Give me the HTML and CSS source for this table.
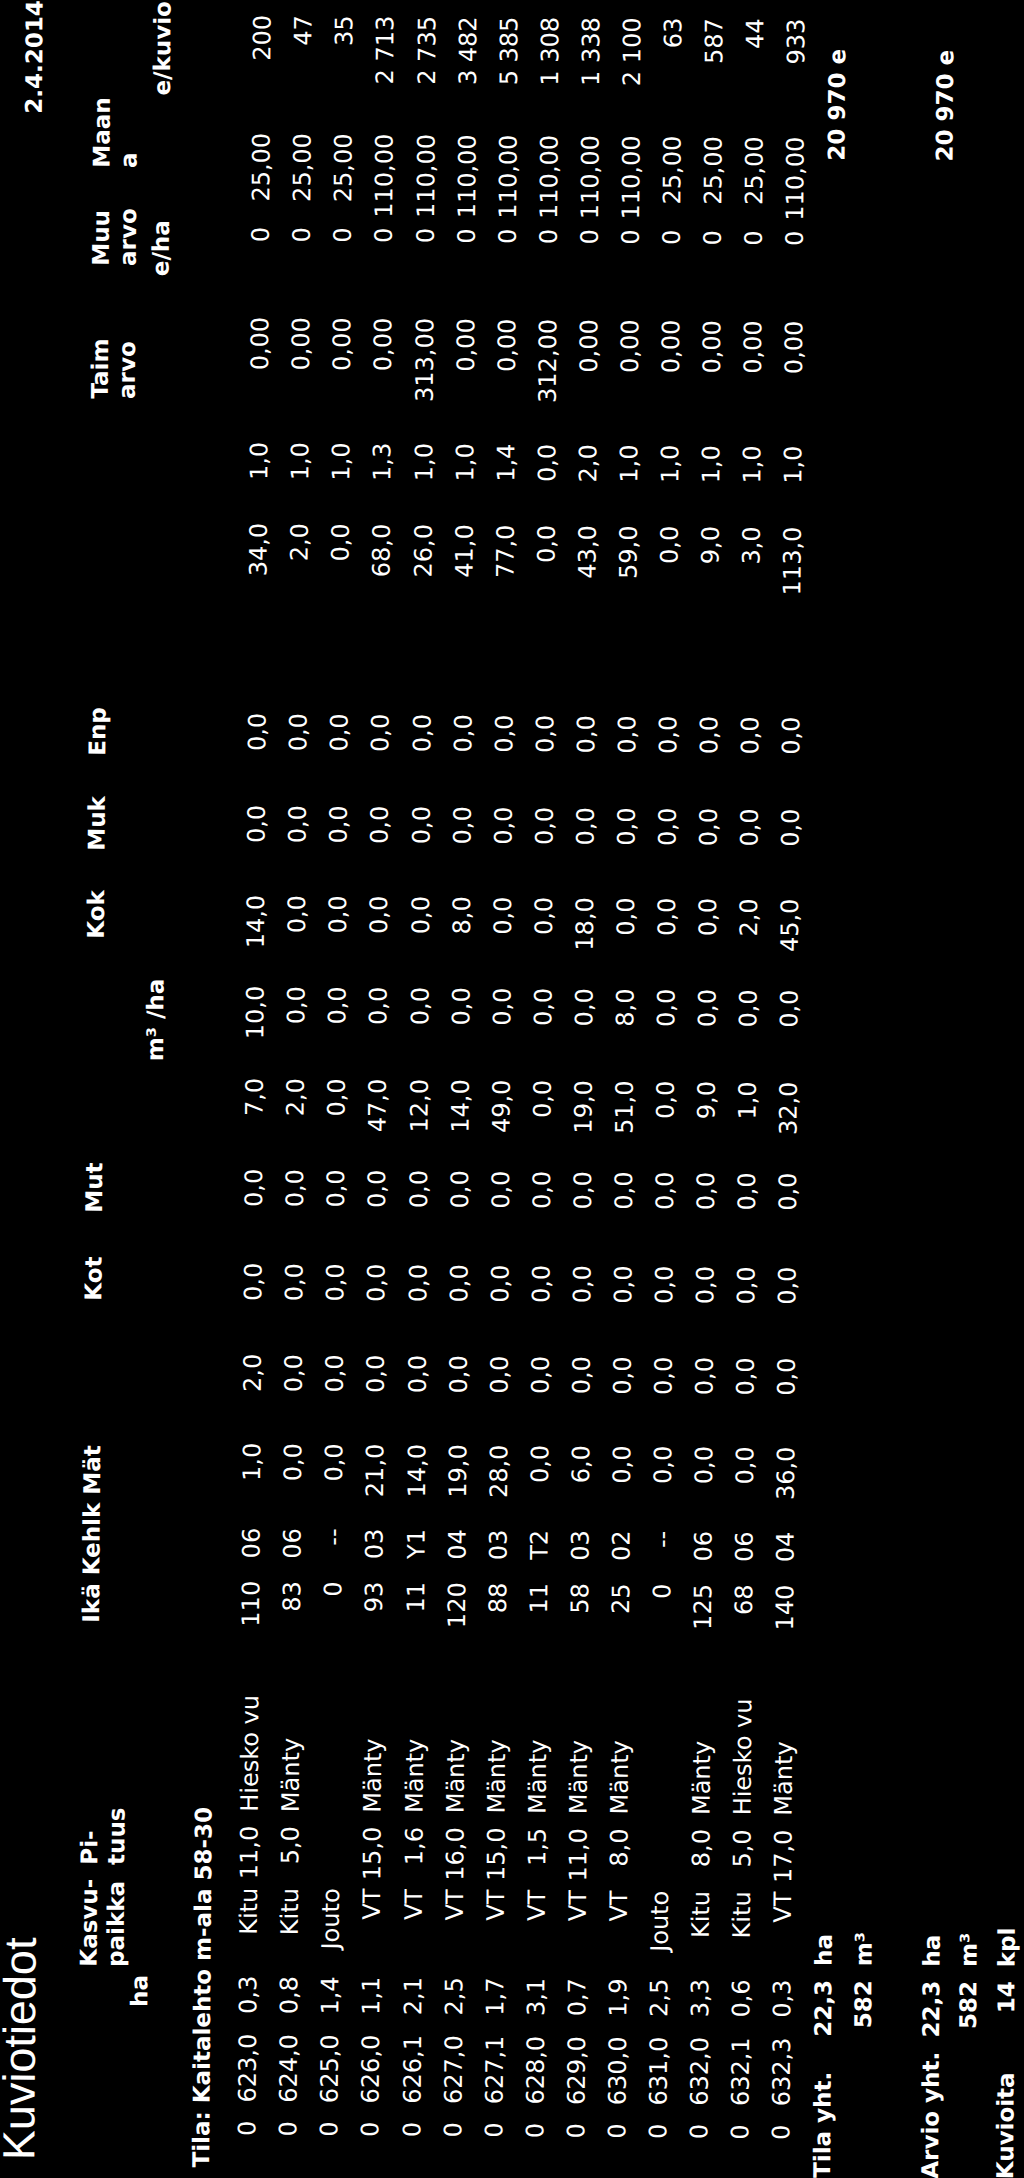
FILE: index.html
```html
<!DOCTYPE html>
<html lang="fi">
<head>
<meta charset="utf-8">
<title>Kuviotiedot</title>
<link rel="stylesheet" href="styles.css">
</head>
<body>
<div class="viewport">
  <div class="page">
    <div class="topbar">
      <h1 class="title">Kuviotiedot</h1>
      <div class="date">2.4.2014</div>
    </div>

    <div class="cols head">
      <div class="h h-ha">ha</div>
      <div class="h h-kasvu"><span>Kasvu-</span><span>paikka</span></div>
      <div class="h h-pi"><span>Pi-</span><span>tuus</span></div>
      <div class="h h-ika">Ikä Kehlk Mät</div>
      <div class="h h-kot">Kot</div>
      <div class="h h-mut">Mut</div>
      <div class="h h-m3">m³ /ha</div>
      <div class="h h-kok">Kok</div>
      <div class="h h-muk">Muk</div>
      <div class="h h-enp">Enp</div>
      <div class="h h-taim"><span>Taim</span><span>arvo</span></div>
      <div class="h h-muu"><span>Muu</span><span>arvo</span><span class="l3">e/ha</span></div>
      <div class="h h-maan"><span>Maan</span><span>a</span></div>
      <div class="h h-kuvio">e/kuvio</div>
    </div>

    <div class="section">Tila: Kaitalehto m-ala 58-30</div>

    <div class="rows">
      <div class="cols row"><span>0</span><span>623,0</span><span>0,3</span><span>Kitu</span><span>11,0</span><span class="sp">Hiesko vu</span><span>110</span><span>06</span><span>1,0</span><span>2,0</span><span>0,0</span><span>0,0</span><span>7,0</span><span>10,0</span><span>14,0</span><span>0,0</span><span>0,0</span><span>34,0</span><span>1,0</span><span>0,00</span><span>0</span><span>25,00</span><span>200</span></div>
      <div class="cols row"><span>0</span><span>624,0</span><span>0,8</span><span>Kitu</span><span>5,0</span><span class="sp">Mänty</span><span>83</span><span>06</span><span>0,0</span><span>0,0</span><span>0,0</span><span>0,0</span><span>2,0</span><span>0,0</span><span>0,0</span><span>0,0</span><span>0,0</span><span>2,0</span><span>1,0</span><span>0,00</span><span>0</span><span>25,00</span><span>47</span></div>
      <div class="cols row"><span>0</span><span>625,0</span><span>1,4</span><span>Jouto</span><span></span><span class="sp"></span><span>0</span><span>--</span><span>0,0</span><span>0,0</span><span>0,0</span><span>0,0</span><span>0,0</span><span>0,0</span><span>0,0</span><span>0,0</span><span>0,0</span><span>0,0</span><span>1,0</span><span>0,00</span><span>0</span><span>25,00</span><span>35</span></div>
      <div class="cols row"><span>0</span><span>626,0</span><span>1,1</span><span>VT</span><span>15,0</span><span class="sp">Mänty</span><span>93</span><span>03</span><span>21,0</span><span>0,0</span><span>0,0</span><span>0,0</span><span>47,0</span><span>0,0</span><span>0,0</span><span>0,0</span><span>0,0</span><span>68,0</span><span>1,3</span><span>0,00</span><span>0</span><span>110,00</span><span>2 713</span></div>
      <div class="cols row"><span>0</span><span>626,1</span><span>2,1</span><span>VT</span><span>1,6</span><span class="sp">Mänty</span><span>11</span><span>Y1</span><span>14,0</span><span>0,0</span><span>0,0</span><span>0,0</span><span>12,0</span><span>0,0</span><span>0,0</span><span>0,0</span><span>0,0</span><span>26,0</span><span>1,0</span><span>313,00</span><span>0</span><span>110,00</span><span>2 735</span></div>
      <div class="cols row"><span>0</span><span>627,0</span><span>2,5</span><span>VT</span><span>16,0</span><span class="sp">Mänty</span><span>120</span><span>04</span><span>19,0</span><span>0,0</span><span>0,0</span><span>0,0</span><span>14,0</span><span>0,0</span><span>8,0</span><span>0,0</span><span>0,0</span><span>41,0</span><span>1,0</span><span>0,00</span><span>0</span><span>110,00</span><span>3 482</span></div>
      <div class="cols row"><span>0</span><span>627,1</span><span>1,7</span><span>VT</span><span>15,0</span><span class="sp">Mänty</span><span>88</span><span>03</span><span>28,0</span><span>0,0</span><span>0,0</span><span>0,0</span><span>49,0</span><span>0,0</span><span>0,0</span><span>0,0</span><span>0,0</span><span>77,0</span><span>1,4</span><span>0,00</span><span>0</span><span>110,00</span><span>5 385</span></div>
      <div class="cols row"><span>0</span><span>628,0</span><span>3,1</span><span>VT</span><span>1,5</span><span class="sp">Mänty</span><span>11</span><span>T2</span><span>0,0</span><span>0,0</span><span>0,0</span><span>0,0</span><span>0,0</span><span>0,0</span><span>0,0</span><span>0,0</span><span>0,0</span><span>0,0</span><span>0,0</span><span>312,00</span><span>0</span><span>110,00</span><span>1 308</span></div>
      <div class="cols row"><span>0</span><span>629,0</span><span>0,7</span><span>VT</span><span>11,0</span><span class="sp">Mänty</span><span>58</span><span>03</span><span>6,0</span><span>0,0</span><span>0,0</span><span>0,0</span><span>19,0</span><span>0,0</span><span>18,0</span><span>0,0</span><span>0,0</span><span>43,0</span><span>2,0</span><span>0,00</span><span>0</span><span>110,00</span><span>1 338</span></div>
      <div class="cols row"><span>0</span><span>630,0</span><span>1,9</span><span>VT</span><span>8,0</span><span class="sp">Mänty</span><span>25</span><span>02</span><span>0,0</span><span>0,0</span><span>0,0</span><span>0,0</span><span>51,0</span><span>8,0</span><span>0,0</span><span>0,0</span><span>0,0</span><span>59,0</span><span>1,0</span><span>0,00</span><span>0</span><span>110,00</span><span>2 100</span></div>
      <div class="cols row"><span>0</span><span>631,0</span><span>2,5</span><span>Jouto</span><span></span><span class="sp"></span><span>0</span><span>--</span><span>0,0</span><span>0,0</span><span>0,0</span><span>0,0</span><span>0,0</span><span>0,0</span><span>0,0</span><span>0,0</span><span>0,0</span><span>0,0</span><span>1,0</span><span>0,00</span><span>0</span><span>25,00</span><span>63</span></div>
      <div class="cols row"><span>0</span><span>632,0</span><span>3,3</span><span>Kitu</span><span>8,0</span><span class="sp">Mänty</span><span>125</span><span>06</span><span>0,0</span><span>0,0</span><span>0,0</span><span>0,0</span><span>9,0</span><span>0,0</span><span>0,0</span><span>0,0</span><span>0,0</span><span>9,0</span><span>1,0</span><span>0,00</span><span>0</span><span>25,00</span><span>587</span></div>
      <div class="cols row"><span>0</span><span>632,1</span><span>0,6</span><span>Kitu</span><span>5,0</span><span class="sp">Hiesko vu</span><span>68</span><span>06</span><span>0,0</span><span>0,0</span><span>0,0</span><span>0,0</span><span>1,0</span><span>0,0</span><span>2,0</span><span>0,0</span><span>0,0</span><span>3,0</span><span>1,0</span><span>0,00</span><span>0</span><span>25,00</span><span>44</span></div>
      <div class="cols row"><span>0</span><span>632,3</span><span>0,3</span><span>VT</span><span>17,0</span><span class="sp">Mänty</span><span>140</span><span>04</span><span>36,0</span><span>0,0</span><span>0,0</span><span>0,0</span><span>32,0</span><span>0,0</span><span>45,0</span><span>0,0</span><span>0,0</span><span>113,0</span><span>1,0</span><span>0,00</span><span>0</span><span>110,00</span><span>933</span></div>
    </div>

    <div class="totals">
      <div class="tot t1"><span class="lab">Tila yht.</span><span class="num">22,3</span><span class="unit">ha</span><span class="sum">20 970 e</span></div>
      <div class="tot t2"><span class="lab"></span><span class="num">582</span><span class="unit">m³</span><span class="sum"></span></div>
      <div class="tot t3"><span class="lab">Arvio yht.</span><span class="num">22,3</span><span class="unit">ha</span><span class="sum">20 970 e</span></div>
      <div class="tot t4"><span class="lab"></span><span class="num">582</span><span class="unit">m³</span><span class="sum"></span></div>
      <div class="tot t5"><span class="lab">Kuvioita</span><span class="num">14</span><span class="unit">kpl</span><span class="sum"></span></div>
    </div>
  </div>
</div>
</body>
</html>
```

FILE: styles.css
```css
html, body {
  margin: 0;
  padding: 0;
  background: #000;
}

body {
  font-family: "DejaVu Sans", Verdana, sans-serif;
  color: #fff;
}

.viewport {
  width: 1024px;
  height: 2178px;
  overflow: hidden;
  background: #000;
}

/* The scanned sheet is landscape and lies rotated a quarter turn, slightly skewed */
.page {
  width: 2178px;
  height: 1024px;
  transform-origin: 0 0;
  transform: translateY(2178px) rotate(-90deg) rotate(0.41deg);
  font-size: 24px;
  background: #000;
}

.topbar {
  display: flex;
  justify-content: space-between;
  align-items: flex-start;
  height: 40px;
}

.title {
  margin: -4px 0 0 18px;
  font-family: "Liberation Sans", Arial, sans-serif;
  font-size: 45px;
  line-height: 45px;
  font-weight: 400;
}

.date {
  margin-top: 7.5px;
  font-size: 23px;
  line-height: 23px;
  font-weight: 700;
}

.cols {
  display: grid;
  grid-template-columns: 59px 87px 58px 88px 62px 186px 59px 53px 85px 89px 91px 94px 91px 92px 91px 90px 92px 190px 81px 125px 90px 94px 118px 13px;
}

/* column headers */
.head {
  margin-top: 33.5px;
  height: 87px;
  font-size: 23px;
  font-weight: 700;
  line-height: 27px;
}

.h {
  white-space: nowrap;
  grid-row: 1;
}

.h span {
  display: block;
}

.h .l3 {
  margin-top: 6px;
  margin-left: -10px;
}

.h-ha { grid-column: 3; text-align: right; margin-top: 51px; }
.h-kasvu { grid-column: 4; padding-left: 8px; }
.h-pi { grid-column: 5; padding-left: 22px; }
.h-ika { grid-column: 7 / span 3; padding-left: 16px; }
.h-kot { grid-column: 11; padding-left: 52px; }
.h-mut { grid-column: 12; padding-left: 49px; }
.h-m3 { grid-column: 14 / span 2; padding-left: 16px; margin-top: 60px; }
.h-kok { grid-column: 15; padding-left: 46px; }
.h-muk { grid-column: 16; padding-left: 43px; }
.h-enp { grid-column: 17; padding-left: 48px; }
.h-taim { grid-column: 20; padding-left: 42px; }
.h-muu { grid-column: 21; padding-left: 50px; }
.h-maan { grid-column: 22; padding-left: 58px; }
.h-kuvio { grid-column: 23 / span 2; text-align: right; margin-top: 60px; }

.section {
  margin-top: 27px;
  padding-left: 12px;
  font-size: 23px;
  font-weight: 700;
  line-height: 27px;
}

/* data rows */
.rows {
  margin-top: 12.7px;
}

.row {
  height: 41.08px;
  line-height: 41.08px;
  font-size: 24px;
}

.row span {
  text-align: right;
  white-space: nowrap;
}

.row .sp {
  text-align: left;
  padding-left: 14px;
}

/* totals */
.tot {
  display: grid;
  grid-template-columns: 140px 64px 1fr auto;
  height: 40px;
  line-height: 40px;
  font-size: 23px;
  font-weight: 700;
  white-space: nowrap;
}

.tot .lab { padding-left: 6px; }
.tot .num { text-align: right; }
.tot .unit { padding-left: 14px; }
.tot .sum { padding-right: 43px; text-align: right; }

.t3 { margin-top: 28px; }
.t4 { margin-top: -3px; }
.t5 { margin-top: -2px; }
```
